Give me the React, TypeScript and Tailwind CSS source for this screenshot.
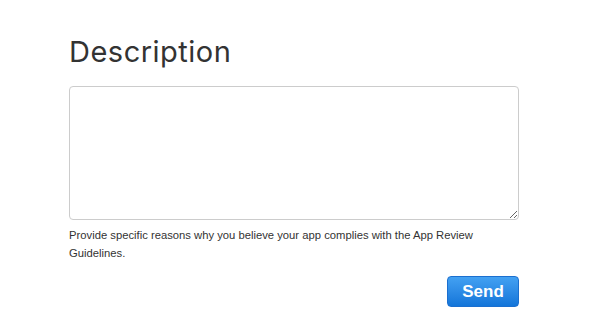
export default function App() {
  return (
    <div className="min-h-[328px] w-[590px] bg-white pl-[69px] pt-[33px] font-['Liberation_Sans',Arial,sans-serif]">
      <div className="flex w-[450px] flex-col">
        {/* Título */}
        <h1 className="font-['Inter',sans-serif] text-[29px] leading-[37px] tracking-[0.5px] text-[#333333]">
          Description
        </h1>

        {/* Campo de texto */}
        <textarea
          className="mt-[16px] block h-[134px] w-[450px] resize-y rounded-[4px] border border-[#cccccc] bg-white outline-none"
        />

        <p className="mt-[6px] text-[11.25px] leading-[18px] text-[#333333]">
          Provide specific reasons why you believe your app complies with the App Review Guidelines.
        </p>

        <div className="mt-[14px] flex justify-end">
          <button className="h-[31px] w-[72px] rounded-[4px] border border-[#1b6fcf] bg-gradient-to-b from-[#43a1f2] to-[#1275d9] text-[17px] font-bold text-white">
            Send
          </button>
        </div>
      </div>
    </div>
  );
}
